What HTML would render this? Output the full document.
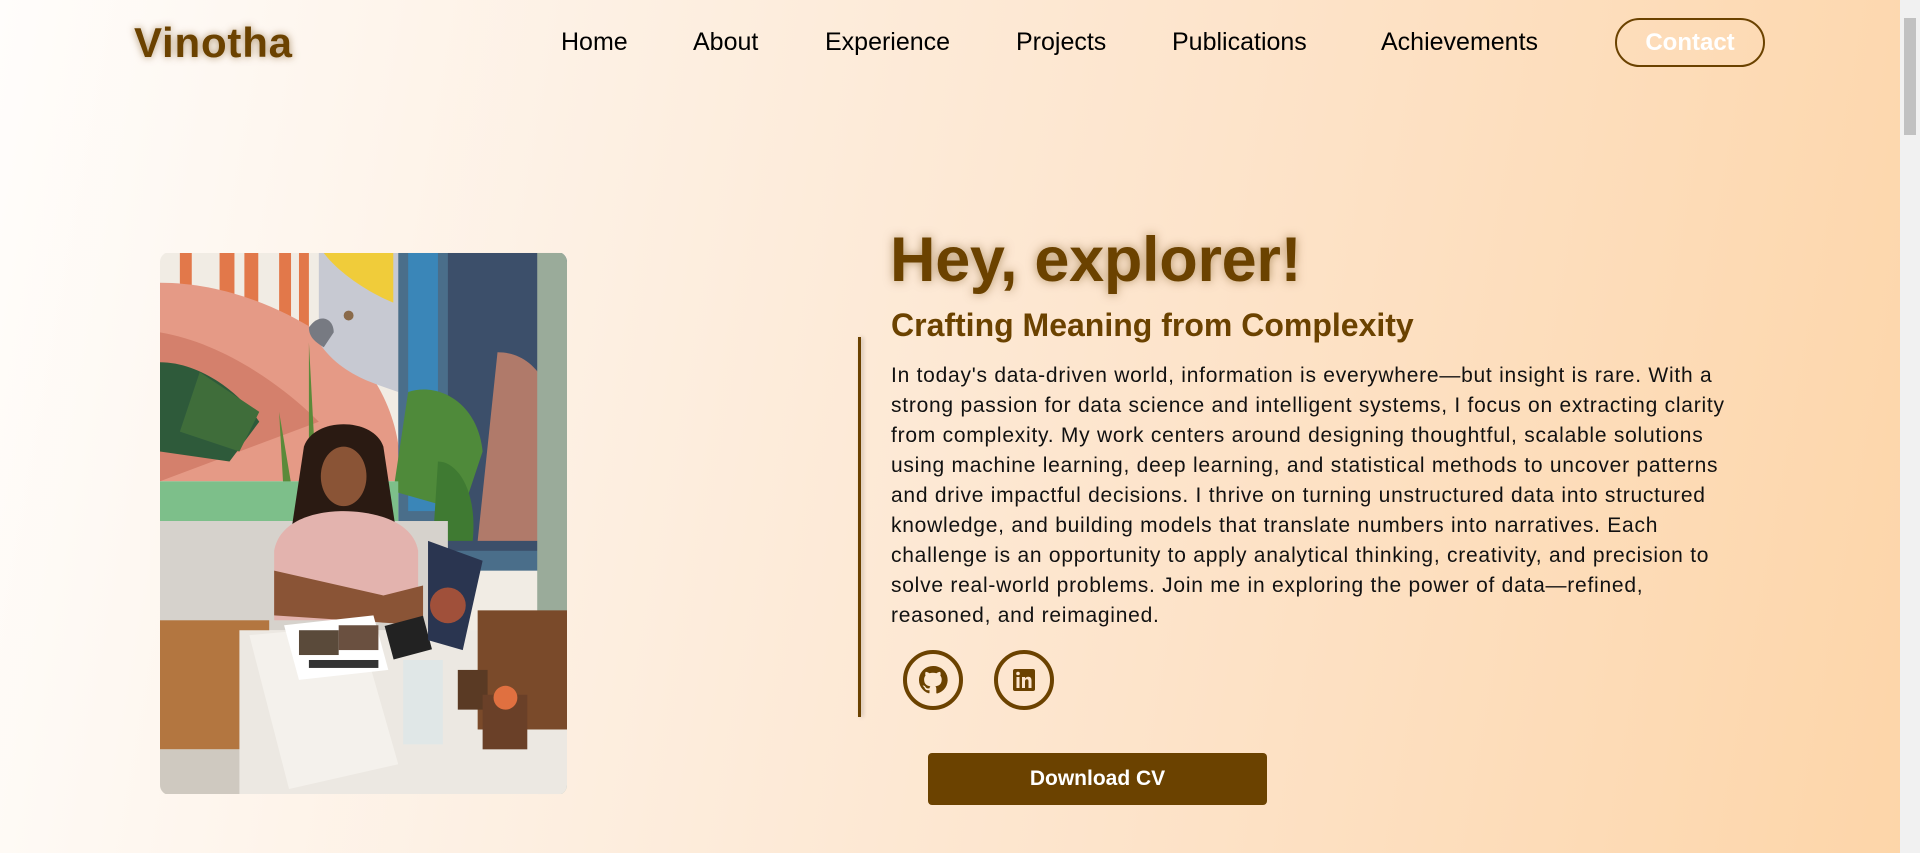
<!DOCTYPE html>
<html><head><meta charset="utf-8">
<style>
*{margin:0;padding:0;box-sizing:border-box}
html,body{width:1920px;height:853px;overflow:hidden}
body{font-family:"Liberation Sans",Arial,sans-serif;background:linear-gradient(100deg,#fffdfb 0%,#fdf0e3 30%,#fde4cb 60%,#fdd5a8 100%);position:relative}
.sb{position:absolute;right:0;top:0;width:20px;height:853px;background:#f1f1f1}
.sb div{position:absolute;left:4px;top:18px;width:12px;height:117px;background:#c1c1c1}
.logo{position:absolute;left:134px;top:19px;font-size:42px;font-weight:bold;color:#6b4200;text-shadow:0 0 8px rgba(107,66,0,.55);letter-spacing:0.8px}
.nav a{position:absolute;top:28px;font-size:25px;color:#000;text-decoration:none}
.contact{position:absolute;left:1615px;top:18px;width:150px;height:49px;border:2px solid #6b4200;border-radius:25px;color:#fff;font-size:24px;font-weight:bold;text-align:center;line-height:45px}
.photo{position:absolute;left:160px;top:252px;width:407px;height:543px;border-radius:10px;overflow:hidden}
h1{position:absolute;left:890px;top:224px;font-size:63px;font-weight:bold;color:#6b4200;text-shadow:0 0 10px rgba(107,66,0,.5);letter-spacing:-0.3px}
h2{position:absolute;left:891px;top:307px;font-size:32px;font-weight:bold;color:#6b4200}
.vl{position:absolute;left:858px;top:337px;width:3px;height:380px;background:#6b4200;box-shadow:2px 0 4px rgba(0,0,0,.2)}
.p{position:absolute;left:891px;top:361px;font-size:21px;line-height:30px;color:#111;white-space:nowrap;letter-spacing:0.75px}
.ic{position:absolute;top:650px;width:60px;height:60px;border:4px solid #6b4200;border-radius:50%}
.btn{position:absolute;left:928px;top:753px;width:339px;height:52px;background:#6b4200;border-radius:4px;color:#fff;font-weight:bold;font-size:21px;text-align:center;line-height:52px}
</style></head><body>
<div class="logo">Vinotha</div>
<div class="nav">
<a style="left:561px">Home</a><a style="left:693px">About</a><a style="left:825px">Experience</a><a style="left:1016px">Projects</a><a style="left:1172px">Publications</a><a style="left:1381px">Achievements</a>
</div>
<div class="contact">Contact</div>

<div class="photo">
<svg width="407" height="543" viewBox="0 0 410 545">
<rect width="410" height="545" fill="#f1ece4"/>
<path d="M20 0h12v60h-12zM60 0h15v50h-15zM85 0h14v80h-14zM120 0h12v75h-12zM140 0h10v90h-10z" fill="#e2784a"/>
<path d="M0 30C80 30 160 70 210 120C240 160 245 210 240 230L0 230z" fill="#e59a86"/>
<path d="M0 80C60 90 120 130 160 170L0 230z" fill="#d4806c"/>
<path d="M160 0h80v140C210 130 180 120 160 90z" fill="#c7c9d2"/>
<path d="M165 0h70v50C210 40 180 20 165 0z" fill="#f0cc3a"/>
<circle cx="190" cy="63" r="5" fill="#8a6a4a"/>
<path d="M150 75c10-15 25-10 25 5l-10 15c-8-5-15-10-15-20z" fill="#777a82"/>
<rect x="240" y="0" width="170" height="320" fill="#4a6e8a"/>
<rect x="250" y="0" width="30" height="260" fill="#3a86b8"/>
<rect x="290" y="0" width="110" height="300" fill="#3c4f6a"/>
<path d="M340 100c40 0 60 40 60 90v100h-80z" fill="#b07a6a"/>
<rect x="380" y="0" width="30" height="545" fill="#9aab9a"/>
<path d="M0 110c40 0 80 30 100 60l-30 40L0 200z" fill="#2e5a3a"/>
<path d="M40 120l60 40 -20 40 -60 -20z" fill="#3f6d3a"/>
<path d="M250 140c30-10 70 10 75 60l-20 60-70-20z" fill="#4f8a3a"/>
<path d="M280 210c20 0 40 30 35 80l-40 0z" fill="#3f7a32"/>
<path d="M120 160l15 90h-10zM150 90l8 150h-8z" fill="#5b8a3a"/>
<rect x="0" y="230" width="240" height="40" fill="#7dbf8a"/>
<rect x="0" y="270" width="290" height="110" fill="#d6d2cc"/>
<rect x="0" y="370" width="110" height="130" fill="#b37640"/>
<rect x="0" y="500" width="90" height="45" fill="#cfc9c0"/>
<path d="M145 195c10-30 70-30 80 0l15 100-110 0z" fill="#2a1a12"/>
<ellipse cx="185" cy="225" rx="23" ry="30" fill="#8a5436"/>
<path d="M115 300c5-30 40-40 70-40s70 10 75 40l0 70-145 0z" fill="#e3b3ae"/>
<path d="M115 320l0 45 150 10 0-40-40 10z" fill="#8a5436"/>
<path d="M80 380h330v165h-330z" fill="#ece8e2"/>
<path d="M90 385l110-10 40 140-110 25z" fill="#f4f1ec"/>
<path d="M125 375l90-10 15 55-90 10z" fill="#fff"/>
<rect x="140" y="380" width="40" height="25" fill="#5a4a3a"/>
<rect x="180" y="375" width="40" height="25" fill="#6a5040"/>
<rect x="150" y="410" width="70" height="8" fill="#333"/>
<rect x="230" y="370" width="40" height="35" fill="#222" transform="rotate(-15 250 387)"/>
<path d="M270 290l55 20-20 90-35-10z" fill="#2a3550"/>
<circle cx="290" cy="355" r="18" fill="#a0503a"/>
<rect x="320" y="360" width="90" height="120" fill="#7a4a2a"/>
<rect x="245" y="410" width="40" height="85" fill="#dde6e8" opacity=".8"/>
<rect x="300" y="420" width="30" height="40" fill="#5a3a24"/>
<rect x="325" y="445" width="45" height="55" fill="#6a4028"/>
<circle cx="348" cy="448" r="12" fill="#e07040"/>
</svg>
</div>

<h1>Hey, explorer!</h1>
<h2>Crafting Meaning from Complexity</h2>
<div class="vl"></div>
<div class="p">In today's data-driven world, information is everywhere—but insight is rare. With a<br>strong passion for data science and intelligent systems, I focus on extracting clarity<br>from complexity. My work centers around designing thoughtful, scalable solutions<br>using machine learning, deep learning, and statistical methods to uncover patterns<br>and drive impactful decisions. I thrive on turning unstructured data into structured<br>knowledge, and building models that translate numbers into narratives. Each<br>challenge is an opportunity to apply analytical thinking, creativity, and precision to<br>solve real-world problems. Join me in exploring the power of data—refined,<br>reasoned, and reimagined.</div>

<div class="ic" style="left:903px"><svg width="52" height="52" viewBox="0 0 52 52"><path fill="#6b4200" d="M26 12a14 14 0 0 0-4.4 27.3c.7.1.9-.3.9-.7v-2.5c-3.9.8-4.7-1.7-4.7-1.7-.6-1.6-1.5-2-1.5-2-1.3-.9.1-.9.1-.9 1.4.1 2.1 1.4 2.1 1.4 1.200 2.1 3.3 1.5 4.1 1.2.1-.9.5-1.5.9-1.8-3.1-.4-6.4-1.600-6.4-6.9 0-1.5.5-2.8 1.4-3.8-.1-.4-.6-1.8.1-3.7 0 0 1.2-.4 3.8 1.4a13 13 0 0 1 7 0c2.7-1.8 3.8-1.4 3.8-1.4.8 1.9.3 3.3.1 3.7.9 1 1.4 2.3 1.4 3.8 0 5.4-3.3 6.5-6.4 6.9.5.4 1 1.3 1 2.6v3.9c0 .4.2.8 1 .7A14 14 0 0 0 26 12z"/></svg></div>
<div class="ic" style="left:994px"><svg width="52" height="52" viewBox="0 0 52 52"><rect x="15" y="15" width="22" height="22" rx="2" fill="#6b4200"/><rect x="18.5" y="23" width="3" height="11" fill="#fde6cf"/><circle cx="20" cy="19.5" r="1.8" fill="#fde6cf"/><path d="M24 23h3v1.5c.7-1.1 1.8-1.8 3.3-1.8 2.4 0 3.2 1.5 3.2 4V34h-3v-6.5c0-1.3-.4-2.2-1.6-2.2s-1.9.9-1.9 2.2V34h-3z" fill="#fde6cf"/></svg></div>

<div class="btn">Download CV</div>
<div class="sb"><div></div></div>
</body></html>
